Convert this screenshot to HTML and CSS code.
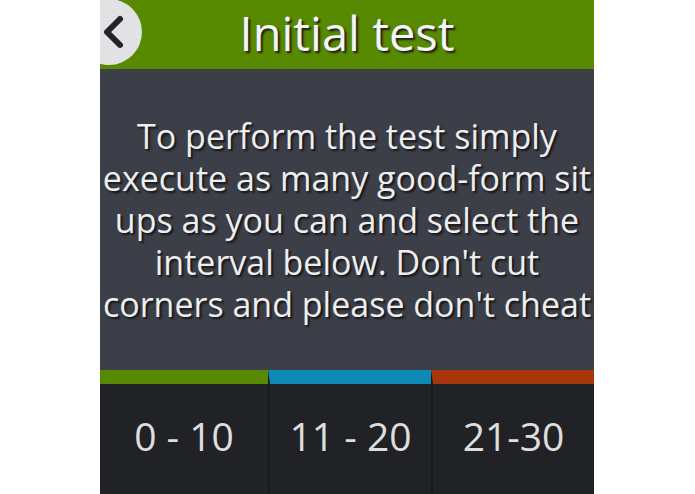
FILE: index.html
```html
<!DOCTYPE html>
<html>
<head>
<meta charset="utf-8">
<link rel="stylesheet" href="styles.css">
</head>
<body>
<div class="watch">
  <header class="header">
    <div class="back">
      <svg width="66" height="66" viewBox="0 0 66 66">
        <polyline points="44,20 31,33 44,46" fill="none" stroke="#23252a" stroke-width="6" stroke-linecap="round" stroke-linejoin="round"/>
      </svg>
    </div>
    <h1 class="title">Initial test</h1>
  </header>
  <main class="body">
    <p class="text">To perform the test simply<br>execute as many good-form sit<br>ups as you can and select the<br>interval below. Don't cut<br>corners and please don't cheat</p>
  </main>
  <div class="options">
    <div class="opt green"><span>0 - 10</span></div>
    <div class="opt blue"><span>11 - 20</span></div>
    <div class="opt orange"><span>21-30</span></div>
  </div>
</div>
</body>
</html>
```
FILE: styles.css
```css
html, body {
  margin: 0;
  padding: 0;
  background: #ffffff;
}
.watch {
  width: 494px;
  height: 494px;
  margin: 0 0 0 100px;
  position: relative;
  overflow: hidden;
  display: flex;
  flex-direction: column;
  font-family: "Open Sans", "DejaVu Sans", sans-serif;
}
.header {
  height: 69px;
  background: #578a00;
  display: flex;
  align-items: center;
  justify-content: center;
  position: relative;
}
.back {
  position: absolute;
  left: -24px;
  top: -1px;
  width: 66px;
  height: 66px;
  border-radius: 50%;
  background: #e2e2e4;
}
.back svg { display: block; }
.title {
  margin: 0;
  font-size: 47px;
  font-weight: 400;
  color: #f4f4f4;
  line-height: 1;
  text-shadow: 2px 2px 2px #1c1c1c;
  margin-top: -2px;
}
.body {
  flex: 1;
  background: #3c3f48;
  display: flex;
  align-items: center;
  justify-content: center;
}
.text {
  margin: 0;
  text-align: center;
  white-space: nowrap;
  font-size: 34px;
  line-height: 42px;
  color: #eeeeee;
  text-shadow: 2px 2px 2px #15161a;
}
.options {
  height: 124px;
  display: grid;
  grid-template-columns: 168px 163px 163px;
  background: #212226;
}
.opt {
  display: flex;
  align-items: center;
  justify-content: center;
  font-size: 39px;
  color: #dedede;
  border-left: 2px solid #17181b;
}
.opt:first-child { border-left: none; }
.opt.green { border-top: 14px solid #578a00; }
.opt.blue { border-top: 14px solid #0b8ab6; }
.opt.orange { border-top: 14px solid #a7370b; }
.opt span { margin-top: -8px; }
```
